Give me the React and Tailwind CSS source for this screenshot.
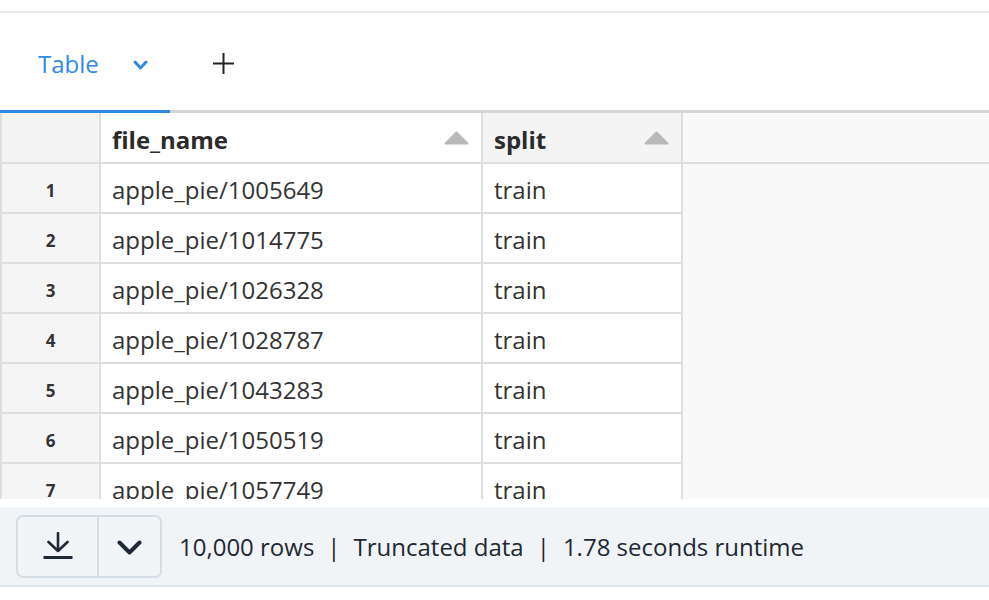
const rows = [
  ["1", "apple_pie/1005649", "train"],
  ["2", "apple_pie/1014775", "train"],
  ["3", "apple_pie/1026328", "train"],
  ["4", "apple_pie/1028787", "train"],
  ["5", "apple_pie/1043283", "train"],
  ["6", "apple_pie/1050519", "train"],
  ["7", "apple_pie/1057749", "train"],
];

function SortArrow() {
  return (
    <svg width="25" height="14" viewBox="0 0 25 14" className="shrink-0">
      <path d="M12.5 1.5 L23.5 12.5 L1.5 12.5 Z" fill="#b9b9b9" stroke="#b9b9b9" strokeWidth="2" strokeLinejoin="round" />
    </svg>
  );
}

function DownloadIcon() {
  return (
    <svg width="30" height="28" viewBox="0 0 30 28">
      <path d="M15 1 V19 M5.5 10 L15 19 L24.5 10" fill="none" stroke="#1f2937" strokeWidth="2.6" strokeLinecap="round" strokeLinejoin="round" />
      <rect x="0.5" y="24" width="29" height="3" fill="#1f2937" />
    </svg>
  );
}

function Chevron({ w, h, color, sw }) {
  return (
    <svg width={w} height={h} viewBox={`0 0 ${w} ${h}`}>
      <path
        d={`M${sw / 2 + 0.5} ${sw / 2 + 0.5} L${w / 2} ${h - sw / 2 - 0.5} L${w - sw / 2 - 0.5} ${sw / 2 + 0.5}`}
        fill="none"
        stroke={color}
        strokeWidth={sw}
        strokeLinecap="round"
        strokeLinejoin="round"
      />
    </svg>
  );
}

export default function App() {
  return (
    <div className="w-full h-[600px] bg-white overflow-hidden pt-[11px] font-['Open_Sans',sans-serif]">
      {/* ===== TABS ===== */}
      <div className="h-[99px] border-t-2 border-[#ebebeb] flex items-center">
        <div className="w-[170px] h-full flex items-center pl-[38px] pt-[4px]">
          <span className="text-[24px] text-[#3189e3] leading-none">Table</span>
          <span className="ml-[34px] mt-[2px]">
            <Chevron w={15} h={10} color="#3189e3" sw={3} />
          </span>
        </div>
        <div className="ml-[43px] pt-[4px]">
          <svg width="21" height="21" viewBox="0 0 21 21">
            <path d="M10.5 0 V21 M0 10.5 H21" stroke="#222" strokeWidth="2" />
          </svg>
        </div>
      </div>
      <div className="flex h-[3px]">
        <div className="w-[170px] bg-[#3189e3]" />
        <div className="flex-1 bg-[#d5d5d5]" />
      </div>

      {/* ===== TABLE ===== */}
      <div className="h-[386px] overflow-hidden bg-[#f9f9f9]">
        <div className="flex h-[51px] border-b-2 border-[#dedede]">
          <div className="w-[101px] border-l-2 border-r-2 border-[#dedede] bg-[#f4f4f4]" />
          <div className="w-[382px] border-r-2 border-[#dedede] bg-white flex items-center justify-between pl-[11px] pr-[12px]">
            <span className="text-[24px] font-bold text-[#2b2b2b] pt-[4px]">file_name</span>
            <SortArrow />
          </div>
          <div className="w-[200px] border-r-2 border-[#dedede] bg-[#f4f4f4] flex items-center justify-between pl-[11px] pr-[12px]">
            <span className="text-[24px] font-bold text-[#2b2b2b] pt-[4px]">split</span>
            <SortArrow />
          </div>
          <div className="flex-1" />
        </div>

        {rows.map(([n, file, split]) => (
          <div key={n} className="flex h-[50px]">
            <div className="w-[101px] border-l-2 border-r-2 border-b-2 border-[#dedede] bg-[#f5f5f5] flex items-center justify-center pt-[5px] text-[17px] font-bold text-[#333]">
              {n}
            </div>
            <div className="w-[382px] border-r-2 border-b-2 border-[#dedede] bg-white flex items-center pl-[11px] pt-[4px] text-[24px] text-[#333]">
              {file}
            </div>
            <div className="w-[200px] border-r-2 border-b-2 border-[#dedede] bg-white flex items-center pl-[11px] pt-[4px] text-[24px] text-[#333]">
              {split}
            </div>
            <div className="flex-1" />
          </div>
        ))}
      </div>

      <div className="h-[8px]" />

      {/* ===== FOOTER ===== */}
      <div className="h-[80px] bg-[#f1f4f7] border-b-2 border-[#e0e5ea] flex items-center pl-[16px]">
        <div className="flex h-[63px] border-2 border-[#d4dce4] rounded-[7px] bg-[#f2f5f8]">
          <button className="w-[81px] flex items-center justify-center border-r-2 border-[#d4dce4] pl-[1px]">
            <DownloadIcon />
          </button>
          <button className="w-[61px] flex items-center justify-center pt-[2px]">
            <Chevron w={25} h={15} color="#1f2937" sw={4} />
          </button>
        </div>
        <div className="ml-[17px] pt-[2px] text-[24px] text-[#1e2833] flex items-center">
          <span>10,000 rows</span>
          <span className="mx-[13px]">|</span>
          <span>Truncated data</span>
          <span className="mx-[13px]">|</span>
          <span>1.78 seconds runtime</span>
        </div>
      </div>
    </div>
  );
}
